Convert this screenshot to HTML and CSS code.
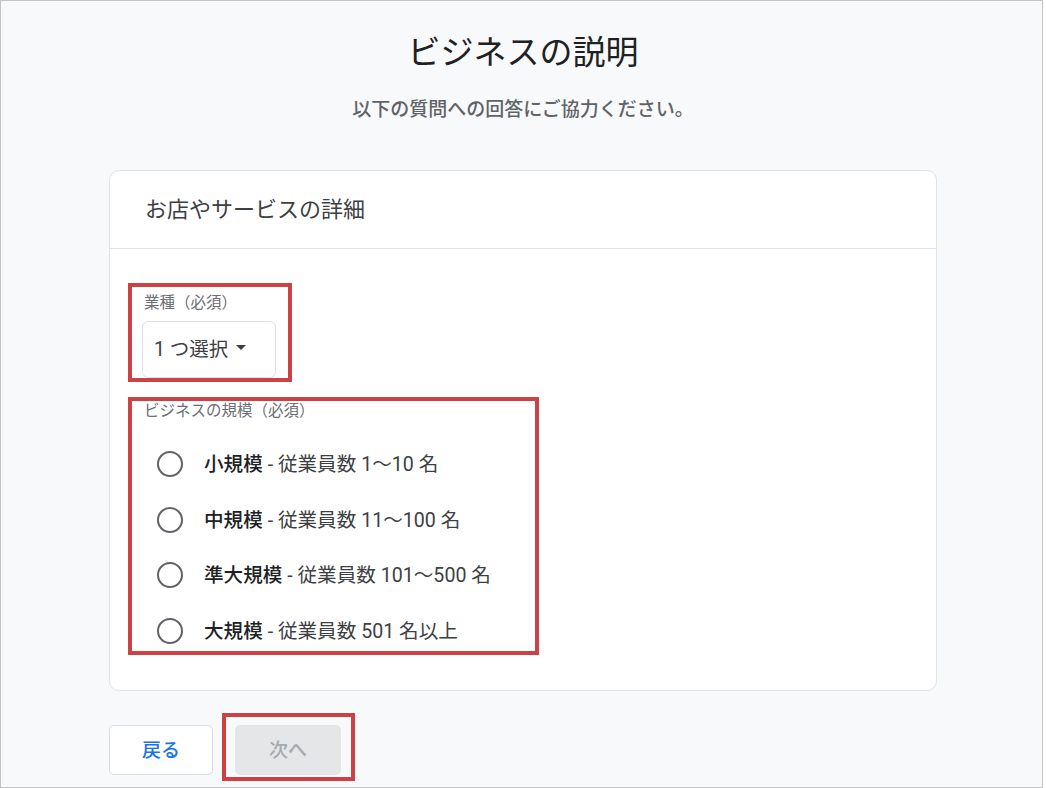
FILE: index.html
```html
<!DOCTYPE html>
<html lang="ja">
<head>
<meta charset="utf-8">
<title>ビジネスの説明</title>
<link rel="stylesheet" href="styles.css">
</head>
<body>
<div class="frame">
  <main class="main">
    <h1 class="title">ビジネスの説明</h1>
    <p class="subtitle">以下の質問への回答にご協力ください。</p>
    <section class="card">
      <div class="card-header">お店やサービスの詳細</div>
      <div class="card-body">
        <div class="hl hl-type">
          <div class="field-label">業種（必須）</div>
          <button class="dropdown" type="button">1 つ選択<span class="caret"></span></button>
        </div>
        <div class="hl hl-size">
          <div class="field-label">ビジネスの規模（必須）</div>
          <div class="options">
            <label class="option"><span class="radio"></span><span class="opt-text"><b>小規模</b> - 従業員数 1〜10 名</span></label>
            <label class="option"><span class="radio"></span><span class="opt-text"><b>中規模</b> - 従業員数 11〜100 名</span></label>
            <label class="option"><span class="radio"></span><span class="opt-text"><b>準大規模</b> - 従業員数 101〜500 名</span></label>
            <label class="option"><span class="radio"></span><span class="opt-text"><b>大規模</b> - 従業員数 501 名以上</span></label>
          </div>
        </div>
      </div>
    </section>
    <div class="actions">
      <button class="btn btn-back" type="button">戻る</button>
      <div class="hl hl-next">
        <button class="btn btn-next" type="button" disabled>次へ</button>
      </div>
    </div>
  </main>
</div>
</body>
</html>
```

FILE: styles.css
```css
* { box-sizing: border-box; }
html, body { margin: 0; padding: 0; background: #ffffff; }
body {
  font-family: Roboto, "Noto Sans CJK JP", "Noto Sans", sans-serif;
  color: #202124;
}
.frame {
  width: 1043px;
  height: 788px;
  border: 1px solid #c4c4c4;
  background: #f8f9fa;
  overflow: hidden;
}
.main {
  width: 828px;
  margin-left: 108px;
  padding-top: 30px;
}
.title {
  margin: 0;
  text-align: center;
  font-size: 33px;
  line-height: 44px;
  font-weight: 400;
  color: #202124;
}
.subtitle {
  margin: 22px 0 0;
  text-align: center;
  font-size: 19px;
  line-height: 26px;
  font-weight: 500;
  color: #5f6368;
}
.card {
  margin-top: 47px;
  background: #ffffff;
  border: 1px solid #e2e3e5;
  border-radius: 10px;
}
.card-header {
  height: 78px;
  padding: 0 0 5px 35px;
  display: flex;
  align-items: center;
  font-size: 22px;
  color: #3c4043;
  border-bottom: 1px solid #e3e4e6;
}
.card-body {
  padding: 34px 18px 35px;
}
.hl {
  border: 4px solid #cc4143;
}
.hl-type {
  width: 164px;
  height: 99px;
  padding: 6px 12px 0 10px;
}
.field-label {
  font-size: 15.5px;
  line-height: 20px;
  color: #6b6f74;
  padding-left: 2px;
  white-space: nowrap;
}
.dropdown {
  margin-top: 8px;
  width: 134px;
  height: 57px;
  background: #ffffff;
  border: 1px solid #dfe1e5;
  border-radius: 6px;
  font-family: Roboto, "Noto Sans CJK JP", sans-serif;
  font-size: 19.5px;
  color: #3c4043;
  display: flex;
  align-items: center;
  padding: 0 0 4px 11px;
}
.caret {
  margin-left: 8px;
  width: 0;
  height: 0;
  border-left: 5px solid transparent;
  border-right: 5px solid transparent;
  border-top: 5px solid #3c4043;
}
.hl-size {
  margin-top: 15px;
  width: 411px;
  height: 258px;
  padding: 0 0 0 10px;
}
.options {
  margin-top: 21px;
  display: flex;
  flex-direction: column;
  gap: 11.5px;
}
.option {
  height: 44px;
  display: flex;
  align-items: center;
  padding-left: 15px;
}
.radio {
  width: 26px;
  height: 26px;
  border: 2.6px solid #5f6368;
  border-radius: 50%;
  flex: none;
}
.opt-text {
  margin-left: 21px;
  font-size: 19.6px;
  color: #3c4043;
  white-space: nowrap;
  padding-bottom: 3px;
}
.opt-text b {
  font-weight: 500;
  color: #202124;
}
.actions {
  margin-top: 22px;
  display: flex;
  align-items: flex-start;
}
.btn {
  height: 50px;
  border-radius: 5px;
  font-family: Roboto, "Noto Sans CJK JP", sans-serif;
  font-size: 19px;
  font-weight: 500;
  padding: 0 0 4px;
}
.btn-back {
  margin-top: 12px;
  width: 104px;
  background: #ffffff;
  border: 1px solid #dadce0;
  color: #1a73e8;
}
.hl-next {
  margin-left: 9px;
  width: 133px;
  height: 68px;
  padding: 8px 0 0 9px;
}
.btn-next {
  width: 106px;
  background: #e5e6e8;
  border: none;
  color: #a6a9ad;
}
```
